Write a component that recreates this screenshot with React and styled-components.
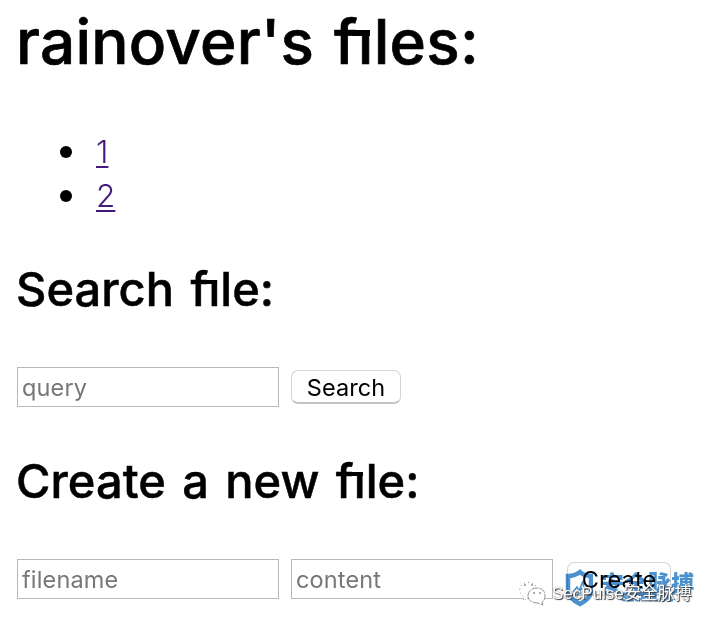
import React from "react";
import styled, { createGlobalStyle } from "styled-components";

const GlobalStyle = createGlobalStyle`
  * { box-sizing: border-box; }
  body { margin: 0; background: #fff; color: #000; font-family: Inter, "Noto Sans CJK SC", sans-serif; }
`;

const Page = styled.main`
  position: relative;
  width: 714px;
  height: 624px;
  padding: 0 16px;
  overflow: hidden;
  background: #fff;
`;

const Title = styled.h1`
  margin: 0;
  height: 129px;
  padding-top: 2px;
  font-size: 62px;
  line-height: 80px;
  font-weight: 500;
  letter-spacing: 0.25px;
  word-spacing: 3px;
  -webkit-text-stroke: 0.7px #000;
  white-space: nowrap;
`;

const Subtitle = styled.h2`
  margin: 0;
  height: ${({ $height }) => $height}px;
  font-size: 47px;
  line-height: 64px;
  font-weight: 500;
  letter-spacing: 0.05px;
  word-spacing: 3.7px;
  -webkit-text-stroke: 0.5px #000;
  white-space: nowrap;
`;

/* The dot is hidden and the crossbar carried over to the stem of the i. */
const Ligature = styled.span`
  position: relative;
  &::before {
    content: "";
    position: absolute;
    right: 0;
    top: 0.2em;
    width: 0.24em;
    height: 0.22em;
    background: #fff;
  }
  &::after {
    content: "";
    position: absolute;
    right: 0.065em;
    top: 0.424em;
    width: 0.28em;
    height: 0.085em;
    background: #000;
  }
`;

const Files = styled.ul`
  margin: 0;
  padding: 1px 0 0;
  height: 128px;
  list-style: none;
`;

const FileItem = styled.li`
  display: flex;
  align-items: center;
  height: 44px;
  padding-left: 44px;
  &::before {
    content: "";
    width: 12px;
    height: 12px;
    margin-right: 24px;
    border-radius: 50%;
    background: #000;
  }
`;

const FileLink = styled.a`
  margin-top: -1px;
  color: #45197b;
  font-size: 31.5px;
  font-weight: 300;
  line-height: 44px;
  text-decoration: underline;
  text-decoration-thickness: 2px;
  text-underline-offset: 3px;
`;

const Form = styled.form`
  display: flex;
  align-items: center;
  gap: 12px;
  height: 40px;
  margin: 0 0 ${({ $space }) => $space || 0}px 1px;
`;

const Field = styled.input`
  width: 262px;
  height: 40px;
  flex: none;
  padding: 0 4px;
  border: 1px solid #b8b8b8;
  border-radius: 0;
  background: #fff;
  font: 400 23.5px/34px Inter, sans-serif;
  letter-spacing: 0.15px;
  &::placeholder { color: #777; opacity: 1; }
`;

const Button = styled.button`
  width: ${({ $width }) => $width}px;
  height: 34px;
  flex: none;
  margin: 0 0 0 ${({ $left }) => $left || 0}px;
  padding: 2px 0 0;
  border: 1px solid #d4d4d4;
  border-bottom: 2px solid #c4c4c4;
  border-radius: 7px;
  background: #fff;
  color: #000;
  font: 400 23.5px/30px Inter, sans-serif;
  letter-spacing: 0.1px;
`;

const Brand = styled.div`
  position: absolute;
  left: 564px;
  top: 568px;
  display: flex;
  color: #4b91d0;
  mix-blend-mode: multiply;
`;

const BrandText = styled.div`
  width: 94px;
  margin: 3px 0 0 8px;
  font: 900 23px/22px "Noto Sans CJK SC", sans-serif;
  letter-spacing: 0.4px;
  white-space: nowrap;
`;

const BrandSite = styled.div`
  margin: -1px 0 0 20px;
  font: 700 10px/12px "Liberation Sans", sans-serif;
  letter-spacing: -0.3px;
  -webkit-text-stroke: 0.8px currentColor;
`;

const Watermark = styled.div`
  position: absolute;
  left: 518px;
  top: 579px;
  display: flex;
  align-items: center;
  height: 30px;
  color: #fff;
  font: 400 17px/30px "Liberation Sans", "Noto Sans CJK SC", sans-serif;
  text-shadow: 1px 1px 1px #333, 0 0 1px #777;
  white-space: nowrap;
`;

function Shield() {
  return (
    <svg width="29" height="41" viewBox="0 0 29 41" fill="none" stroke="currentColor">
      <path d="M16 4C12 7 8 8 4 8v14c0 7 6 11 12 14 6-3 11-7 11-14V8c-4 0-8-1-11-4Z" strokeWidth="4.5" />
      <path d="m9 24 4-5 2 4 4-10 1 8h4M13 28l5-8" strokeWidth="1.6" />
    </svg>
  );
}

function ChatIcon() {
  return (
    <svg width="34" height="30" viewBox="0 0 34 30" fill="#fff" stroke="#777" strokeWidth=".8">
      <path d="M18 7C15 2 4 2 2 9c-1 4 1 7 4 9l-1 4 5-3h4" strokeDasharray="1 3" />
      <path d="M10 17c0-5 4-8 9-8 5 0 8 3 8 8 0 3-1 5-3 6l1 3-5-2c-6 0-10-3-10-7Z" strokeDasharray="7 1" />
      <g fill="#444" stroke="none">
        <circle cx="7" cy="6" r=".8" /><circle cx="14" cy="6" r=".8" />
        <circle cx="16" cy="14" r=".8" /><circle cx="22" cy="14" r=".8" />
      </g>
    </svg>
  );
}

export default function App() {
  return (
    <>
      <GlobalStyle />
      <Page>
        <Title>rainover's <Ligature>fi</Ligature>les:</Title>
        <Files>
          <FileItem><FileLink href="#1">1</FileLink></FileItem>
          <FileItem><FileLink href="#2">2</FileLink></FileItem>
        </Files>
        <Subtitle $height={110}>Search <Ligature>fi</Ligature>le:</Subtitle>
        <Form $space={42}>
          <Field placeholder="query" />
          <Button type="button" $width={110}>Search</Button>
        </Form>
        <Subtitle $height={110}>Create a new <Ligature>fi</Ligature>le:</Subtitle>
        <Form>
          <Field placeholder="filename" />
          <Field placeholder="content" />
          <Button type="button" $width={104} $left={2}>Create</Button>
        </Form>
        <Brand>
          <Shield />
          <BrandText>安全脉搏<BrandSite>SECPULSE</BrandSite></BrandText>
        </Brand>
        <Watermark><ChatIcon />SecPulse安全脉搏</Watermark>
      </Page>
    </>
  );
}
